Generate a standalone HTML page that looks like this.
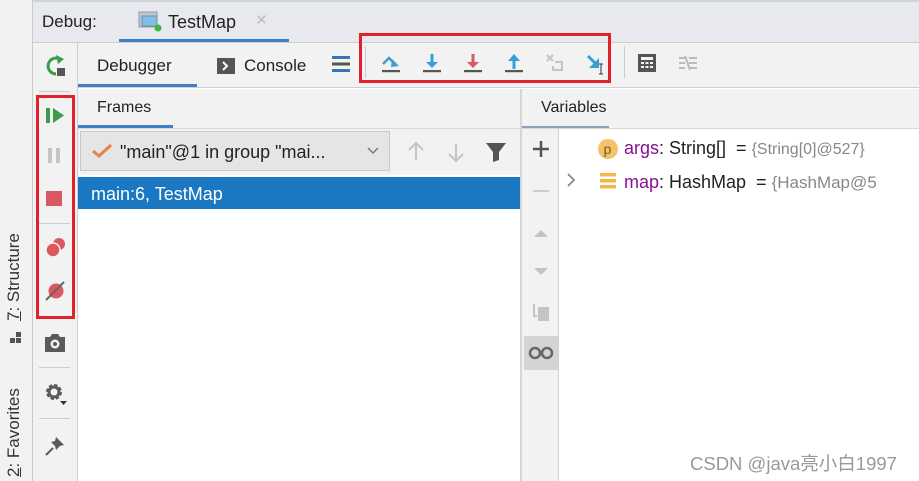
<!DOCTYPE html><html><head><style>
*{margin:0;padding:0;box-sizing:border-box}
body{width:919px;height:481px;overflow:hidden;background:#fff;font-family:"Liberation Sans","Noto Sans CJK SC",sans-serif;position:relative;color:#222}
.a{position:absolute}
.t{font-size:17px;white-space:nowrap}
</style></head><body>
<div class="a" style="left:0;top:0;width:33px;height:481px;background:#f2f2f2;border-right:1px solid #c9c9c9"></div>
<div class="a" style="left:33px;top:0;width:886px;height:43px;background:#e7e9ee;border-top:2px solid #d0d3d8;border-bottom:1px solid #cfcfcf"></div>
<div class="a t" style="left:42px;top:12px">Debug:</div>
<svg class="a" style="left:138px;top:11px" width="24" height="22"><rect x="1" y="1" width="18" height="15" fill="#b9c9d8" stroke="#8a9aab"/><rect x="4" y="5" width="15" height="10" fill="#7cc0e8" stroke="#7a8a99"/><circle cx="20" cy="17" r="3.5" fill="#3fb43f"/></svg>
<div class="a t" style="left:168px;top:12px;font-size:18px">TestMap</div>
<div class="a" style="left:256px;top:10px;color:#bbb;font-size:19px">×</div>
<div class="a" style="left:119px;top:39px;width:170px;height:3px;background:#3f7fc8"></div>
<div class="a" style="left:33px;top:43px;width:45px;height:438px;background:#f2f2f2;border-right:1px solid #cfcfcf"></div>
<svg class="a" style="left:44px;top:54px" width="24" height="24"><path d="M16 5 A8 8 0 1 0 12 20" stroke="#3c9a4c" stroke-width="3" fill="none"/><path d="M12 1 L20 5 L14 10Z" fill="#3c9a4c"/><rect x="13" y="14" width="8" height="8" fill="#555"/></svg>
<div class="a" style="left:39px;top:91px;width:31px;height:1px;background:#ccc"></div>
<svg class="a" style="left:45px;top:106px" width="22" height="20"><rect x="1" y="2" width="4" height="15" fill="#3c9a4c"/><path d="M8 2 L19 9.5 L8 17Z" fill="#3c9a4c"/></svg>
<svg class="a" style="left:46px;top:146px" width="18" height="20"><rect x="2" y="2" width="4" height="15" fill="#c4c4c4"/><rect x="10" y="2" width="4" height="15" fill="#c4c4c4"/></svg>
<div class="a" style="left:46px;top:191px;width:16px;height:15px;background:#db5860"></div>
<div class="a" style="left:39px;top:223px;width:31px;height:1px;background:#ccc"></div>
<svg class="a" style="left:44px;top:236px" width="24" height="24"><circle cx="15" cy="8" r="6" fill="#db5860"/><circle cx="9" cy="14" r="7" fill="#db5860" stroke="#f2f2f2" stroke-width="1.5"/></svg>
<svg class="a" style="left:44px;top:279px" width="24" height="24"><circle cx="12" cy="12" r="7.5" fill="#db5860"/><path d="M2 21 L20 3" stroke="#666" stroke-width="2"/></svg>
<svg class="a" style="left:43px;top:332px" width="24" height="22"><path d="M2 5 h5 l2-3 h6 l2 3 h5 v15 h-20z" fill="#5a5a5a"/><circle cx="12" cy="12" r="4.5" fill="#f2f2f2"/><circle cx="12" cy="12" r="2" fill="#5a5a5a"/></svg>
<div class="a" style="left:39px;top:367px;width:31px;height:1px;background:#ccc"></div>
<svg class="a" style="left:43px;top:381px" width="26" height="26"><circle cx="11" cy="11" r="6" fill="none" stroke="#5a5a5a" stroke-width="4" stroke-dasharray="3 1.7"/><circle cx="11" cy="11" r="5" fill="none" stroke="#5a5a5a" stroke-width="3"/><path d="M17 20 h7 l-3.5 4z" fill="#333"/></svg>
<div class="a" style="left:39px;top:418px;width:31px;height:1px;background:#ccc"></div>
<svg class="a" style="left:43px;top:434px" width="24" height="24"><path d="M13 3 L21 11 L17 12 L13 16 L12 12 L8 8 L12 7Z" fill="#5a5a5a"/><path d="M3 21 L10 14" stroke="#5a5a5a" stroke-width="2"/></svg>
<div class="a" style="left:4px;top:321px;transform-origin:0 0;transform:rotate(-90deg);font-size:17px;white-space:nowrap;color:#333"><u>7</u>: Structure</div>
<svg class="a" style="left:9px;top:331px" width="14" height="14"><rect x="1" y="7" width="5" height="5" fill="#555"/><rect x="7" y="7" width="5" height="5" fill="#555"/><rect x="7" y="1" width="5" height="5" fill="#555"/></svg>
<div class="a" style="left:4px;top:477px;transform-origin:0 0;transform:rotate(-90deg);font-size:17px;white-space:nowrap;color:#333"><u>2</u>: Favorites</div>
<div class="a" style="left:78px;top:43px;width:841px;height:45px;background:#f2f2f2;border-bottom:1px solid #d0d0d0"></div>
<div class="a t" style="left:97px;top:56px">Debugger</div>
<div class="a" style="left:78px;top:84px;width:119px;height:3px;background:#3f7fc8"></div>
<svg class="a" style="left:216px;top:57px" width="20" height="18"><rect x="1" y="1" width="18" height="16" fill="#555"/><path d="M7 5 L11 9 L7 13" stroke="#fff" stroke-width="2" fill="none"/></svg>
<div class="a t" style="left:244px;top:56px">Console</div>
<svg class="a" style="left:331px;top:54px" width="20" height="20"><rect x="1" y="2" width="18" height="3" fill="#3574b8"/><rect x="1" y="8.5" width="18" height="3" fill="#555"/><rect x="1" y="15" width="18" height="3" fill="#3574b8"/></svg>
<div class="a" style="left:365px;top:46px;width:1px;height:32px;background:#ccc"></div>
<svg class="a" style="left:380px;top:52px" width="240" height="24">
<g><path d="M3 12 L9 6 L13 10" stroke="#389fd6" stroke-width="2.5" fill="none"/><path d="M12 7 L19 14 L11 15Z" fill="#389fd6"/><rect x="2" y="18" width="18" height="2.2" fill="#555"/></g>
<g transform="translate(42,0)"><rect x="8.5" y="2" width="3" height="9" fill="#389fd6"/><path d="M4 10 h12 l-6 6z" fill="#389fd6"/><rect x="1" y="18" width="18" height="2.2" fill="#555"/></g>
<g transform="translate(83,0)"><rect x="8.5" y="2" width="3" height="9" fill="#db5860"/><path d="M4 10 h12 l-6 6z" fill="#db5860"/><rect x="1" y="18" width="18" height="2.2" fill="#555"/></g>
<g transform="translate(124,0)"><rect x="8.5" y="8" width="3" height="9" fill="#389fd6"/><path d="M4 9 h12 l-6 -7z" fill="#389fd6"/><rect x="1" y="18" width="18" height="2.2" fill="#555"/></g>
<g transform="translate(165,0)" stroke="#c4c4c4" stroke-width="2" fill="none"><path d="M2 3 L8 9 M8 3 L2 9"/><path d="M10 10 h7 v8 h-9 v-4"/></g>
<g transform="translate(205,0)"><path d="M3 4 L12 13" stroke="#389fd6" stroke-width="3"/><path d="M14 6 L14 16 L4 16Z" fill="#389fd6"/><path d="M16 12 v10 M14 12 h4 M14 22 h4" stroke="#333" stroke-width="1"/></g>
</svg>
<div class="a" style="left:624px;top:46px;width:1px;height:32px;background:#ccc"></div>
<svg class="a" style="left:637px;top:53px" width="20" height="20"><rect x="1" y="1" width="18" height="18" fill="#555"/><rect x="4" y="4" width="12" height="3" fill="#f2f2f2"/><g fill="#f2f2f2"><rect x="4" y="9" width="3" height="2"/><rect x="8.5" y="9" width="3" height="2"/><rect x="13" y="9" width="3" height="2"/><rect x="4" y="13" width="3" height="2"/><rect x="8.5" y="13" width="3" height="2"/><rect x="13" y="13" width="3" height="2"/></g></svg>
<svg class="a" style="left:678px;top:53px" width="20" height="20" stroke="#bbb" stroke-width="2" fill="none"><path d="M1 5 h6 M1 10 h6 M1 15 h6 M11 5 h8 M11 10 h8 M11 15 h8 M7 3 L12 17"/></svg>
<div class="a" style="left:78px;top:89px;width:442px;height:40px;background:#f2f2f2;border-bottom:1px solid #d8d8d8"></div>
<div class="a t" style="left:97px;top:99px;font-size:16px">Frames</div>
<div class="a" style="left:78px;top:125px;width:95px;height:3px;background:#3f7fc8"></div>
<div class="a" style="left:78px;top:129px;width:442px;height:46px;background:#f2f2f2"></div>
<div class="a" style="left:80px;top:131px;width:310px;height:40px;background:#e5e5e5;border:1px solid #c8c8c8"></div>
<svg class="a" style="left:91px;top:143px" width="22" height="16"><path d="M2 8 L8 13 L20 2" stroke="#e8824a" stroke-width="3" fill="none"/></svg>
<div class="a t" style="left:120px;top:142px;font-size:18px">"main"@1 in group "mai...</div>
<svg class="a" style="left:366px;top:146px" width="14" height="10"><path d="M2 2 L7 7 L12 2" stroke="#777" stroke-width="1.5" fill="none"/></svg>
<svg class="a" style="left:405px;top:140px" width="110" height="24" fill="none" stroke="#c4c4c4" stroke-width="2"><path d="M11 20 V4 M4 10 L11 3 L18 10"/><path d="M51 4 V20 M44 14 L51 21 L58 14"/><path d="M81 3 h20 l-7 9 v8 l-6 2 v-10z" fill="#555" stroke="none"/></svg>
<div class="a" style="left:78px;top:177px;width:442px;height:32px;background:#1a78c2"></div>
<div class="a t" style="left:91px;top:184px;color:#fff;font-size:18px">main:6, TestMap</div>
<div class="a" style="left:520px;top:89px;width:2px;height:392px;background:#d6d6d6"></div>
<div class="a" style="left:522px;top:89px;width:397px;height:40px;background:#f2f2f2;border-bottom:1px solid #d8d8d8"></div>
<div class="a t" style="left:541px;top:99px;font-size:16px">Variables</div>
<div class="a" style="left:522px;top:126px;width:87px;height:2px;background:#8aa0bf"></div>
<div class="a" style="left:522px;top:129px;width:37px;height:352px;background:#f2f2f2;border-right:1px solid #d0d0d0"></div>
<svg class="a" style="left:528px;top:138px" width="26" height="240"><path d="M13 3 v16 M5 11 h16" stroke="#555" stroke-width="2.5"/><path d="M5 53 h16" stroke="#ccc" stroke-width="2"/><path d="M6 99 h14 l-7 -7z" fill="#c4c4c4"/><path d="M6 130 h14 l-7 7z" fill="#c4c4c4"/><path d="M6 166 v12 h3" stroke="#c4c4c4" stroke-width="2" fill="none"/><rect x="10" y="169" width="11" height="14" fill="#c4c4c4"/></svg>
<div class="a" style="left:524px;top:336px;width:34px;height:34px;background:#d4d4d4"></div>
<svg class="a" style="left:527px;top:344px" width="28" height="18"><circle cx="8" cy="9" r="5" stroke="#666" stroke-width="2.5" fill="none"/><circle cx="20" cy="9" r="5" stroke="#666" stroke-width="2.5" fill="none"/></svg>
<svg class="a" style="left:597px;top:138px" width="22" height="22"><circle cx="11" cy="11" r="10" fill="#f5c26b"/><text x="6.5" y="16" font-size="14" fill="#7a5a20" font-family="Liberation Sans">p</text></svg>
<div class="a t" style="left:624px;top:138px;font-size:18px"><span style="color:#871094">args</span>: String[]&nbsp; = <span style="color:#888;font-size:16px">{String[0]@527}</span></div>
<svg class="a" style="left:565px;top:172px" width="12" height="16"><path d="M3 2 L9 8 L3 14" stroke="#888" stroke-width="1.8" fill="none"/></svg>
<svg class="a" style="left:599px;top:171px" width="18" height="20"><rect x="1" y="2" width="16" height="3.5" fill="#f5b74a"/><rect x="1" y="8" width="16" height="3.5" fill="#f5b74a"/><rect x="1" y="14" width="16" height="3.5" fill="#f5b74a"/></svg>
<div class="a t" style="left:624px;top:172px;font-size:18px"><span style="color:#871094">map</span>: HashMap&nbsp; = <span style="color:#888;font-size:17px">{HashMap@5</span></div>
<div class="a" style="left:690px;top:450px;font-size:18.5px;color:#999;white-space:nowrap">CSDN @java亮小白1997</div>
<div class="a" style="left:359px;top:33px;width:252px;height:50px;border:3px solid #e3212b"></div>
<div class="a" style="left:36px;top:95px;width:39px;height:224px;border:3px solid #e3212b"></div>
</body></html>
